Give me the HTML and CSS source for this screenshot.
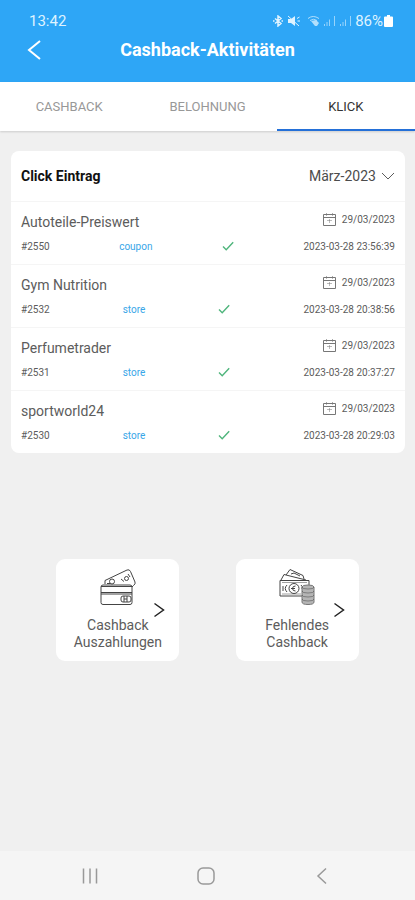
FILE: index.html
```html
<!DOCTYPE html>
<html lang="de">
<head>
<meta charset="utf-8">
<meta name="viewport" content="width=device-width, initial-scale=1">
<title>Cashback-Aktivitäten</title>
<link rel="stylesheet" href="styles.css">
</head>
<body>
<svg class="sprite" aria-hidden="true">
  <symbol id="check" viewBox="0 0 12 10"><path d="M1 5.5 4.2 8.7 11.2 1.2"/></symbol>
  <symbol id="calendar" viewBox="0 0 13 13"><path d="M.5 1.500h12v11H.5zM.5 4.500h12M3.500.4V2.500M9.500.4V2.500"/><path class="pale" d="M4 7.500h5M6.500 6v4"/></symbol>
  <symbol id="chevron" viewBox="0 0 12 16"><path d="M1.500 1.500 10.500 8 1.500 14.500"/></symbol>
</svg>
<header class="top">
  <div class="status">
    <span class="clock">13:42</span>
    <span class="indicators">
      <svg class="ind bold" width="12" height="12" viewBox="0 0 12 12"><path d="M3 3.500 9 8.500 6 11V1l3 2.500L3 8.500M1 6h1.500M9.500 6H11"/></svg>
      <svg class="ind mute" width="14" height="12" viewBox="0 0 14 12"><path class="solid" d="M1 4h3l4-3v10L4 8H1z"/><path d="M1 1l11 10M10 3.500 12.500 2M10.500 6H13"/></svg>
      <svg class="ind faint" width="13" height="12" viewBox="0 0 13 12"><path d="M1 3.500Q6-.5 12 3.500M3 5.500Q6.500 3 10 5.500"/><path class="solid" d="M4 6l5-1 3 3-2 3H8z"/></svg>
      <svg class="ind signal" width="13" height="12" viewBox="0 0 13 12"><path d="M1.500 11V9M4 11V7M6.500 11V4.500M11.500 11V1"/></svg>
      <svg class="ind signal" width="13" height="12" viewBox="0 0 13 12"><path d="M1.500 11V9M4 11V7M6.500 11V4.500M11.500 11V1"/></svg>
      <span class="percent">86%</span>
      <svg class="battery" width="9" height="12" viewBox="0 0 9 12"><path d="M3 0h3v1.500h2q1 0 1 1V11q0 1-1 1H1q-1 0-1-1V2.500q0-1 1-1h2z"/></svg>
    </span>
  </div>
  <div class="titlebar">
    <button class="back" aria-label="Zurück"><svg width="14" height="20" viewBox="0 0 14 20"><path d="M13 1 2 10l11 9"/></svg></button>
    <h1>Cashback-Aktivitäten</h1>
  </div>
</header>
<nav class="tabs">
  <a href="#cashback">CASHBACK</a>
  <a href="#belohnung">BELOHNUNG</a>
  <a href="#klick" class="active" aria-current="page">KLICK</a>
</nav>
<main>
  <section class="card">
    <div class="card-head">
      <h2>Click Eintrag</h2>
      <div class="month">
        <select aria-label="Monat"><option>März-2023</option></select>
        <svg width="14" height="8" viewBox="0 0 14 8"><path d="M1 1l6 6 6-6"/></svg>
      </div>
    </div>
    <ul class="entries">
      <li>
        <div class="line"><span class="name">Autoteile-Preiswert</span><span class="date"><svg><use href="#calendar"/></svg>29/03/2023</span></div>
        <div class="line meta"><span>#2550</span><span class="kind">coupon</span><svg class="check"><use href="#check"/></svg><time>2023-03-28 23:56:39</time></div>
      </li>
      <li>
        <div class="line"><span class="name">Gym Nutrition</span><span class="date"><svg><use href="#calendar"/></svg>29/03/2023</span></div>
        <div class="line meta"><span>#2532</span><span class="kind">store</span><svg class="check"><use href="#check"/></svg><time>2023-03-28 20:38:56</time></div>
      </li>
      <li>
        <div class="line"><span class="name">Perfumetrader</span><span class="date"><svg><use href="#calendar"/></svg>29/03/2023</span></div>
        <div class="line meta"><span>#2531</span><span class="kind">store</span><svg class="check"><use href="#check"/></svg><time>2023-03-28 20:37:27</time></div>
      </li>
      <li>
        <div class="line"><span class="name">sportworld24</span><span class="date"><svg><use href="#calendar"/></svg>29/03/2023</span></div>
        <div class="line meta"><span>#2530</span><span class="kind">store</span><svg class="check"><use href="#check"/></svg><time>2023-03-28 20:29:03</time></div>
      </li>
    </ul>
  </section>
  <div class="actions">
    <button class="action">
      <svg class="picture" width="38" height="38" viewBox="0 0 38 38">
        <path d="M6 16V12.500L28 2q2.500-1 3.500 1.500L36 14q.8 2-1.500 3.500L33 19"/>
        <circle cx="13" cy="13.500" r="2.500"/><path d="M8 15.500h3M22 11l3 2.500"/><circle cx="27.500" cy="10.500" r="2"/><path d="M29 6l2 3"/>
        <rect x="2" y="17" width="31" height="19.500" rx="2"/>
        <path d="M2 18.500h31M2 24.500h31M2 26h31"/>
        <rect x="22" y="28" width="10" height="6" rx="2"/><path d="M25 28v6M28 28v6M25 31h3"/>
      </svg>
      <span>Cashback<br>Auszahlungen</span>
      <svg class="arrow"><use href="#chevron"/></svg>
    </button>
    <button class="action">
      <svg class="picture" width="38" height="38" viewBox="0 0 38 38">
        <path d="M3 12 6 6.500 28 12M8 7l4-5.500 13 6 1 3.500M13 6l3-1 6 3"/>
        <path d="M24 28H2V12.500h29V17"/><path class="pale" d="M4 14.500h25M4 26h19"/>
        <circle cx="16" cy="20.500" r="5"/><path d="M17.500 18q-3 0-3 2.500t3 2.500M13 20.500h4M5 18v5M9 17q-3.500 3.500 0 7M23 17q2 1.500 1 4"/>
        <path class="coins" d="M24 19q0-2 6-2t6 2v15q0 2.500-6 2.500T24 34z"/>
        <path class="pale" d="M24 19q0 2 6 2t6-2M24 23q0 2 6 2t6-2M24 27q0 2 6 2t6-2M24 31q0 2 6 2t6-2"/>
      </svg>
      <span>Fehlendes<br>Cashback</span>
      <svg class="arrow"><use href="#chevron"/></svg>
    </button>
  </div>
</main>
<footer class="system">
  <button aria-label="Letzte Apps"><svg width="18" height="18" viewBox="0 0 18 18"><path d="M2.500 1.500v15M9 1.500v15M15.500 1.500v15"/></svg></button>
  <button aria-label="Startseite"><svg width="18" height="18" viewBox="0 0 18 18"><rect x="1" y="1" width="16" height="16" rx="5"/></svg></button>
  <button aria-label="Zurück"><svg width="18" height="18" viewBox="0 0 18 18"><path d="M13 1.500 5 9l8 7.500"/></svg></button>
</footer>
</body>
</html>
```
FILE: styles.css
```css
* { box-sizing: border-box; }
body {
  margin: 0;
  min-height: 100vh;
  display: flex;
  flex-direction: column;
  background: #f0f0f0;
  color: #5c5c5c;
  font-family: Roboto, "Liberation Sans", sans-serif;
}
h1, h2, ul { margin: 0; padding: 0; }
button {
  border: 0;
  padding: 0;
  background: none;
  color: inherit;
  font: inherit;
}
svg {
  flex: none;
  fill: none;
  stroke: currentColor;
}
.sprite { position: absolute; width: 0; height: 0; }
.pale { opacity: 0.5; }

.top {
  height: 82px;
  padding-top: 10px;
  background: #2ea6f6;
  color: #fff;
}
.status {
  display: flex;
  justify-content: space-between;
  align-items: center;
  height: 22px;
  padding: 0 22px 0 29px;
  font-size: 15px;
  color: #dff3ff;
}
.indicators { display: flex; align-items: center; gap: 3px; }
.percent { font-size: 15px; }
.ind .solid, .battery { fill: currentColor; stroke: none; }
.bold { stroke-width: 1.500; }
.battery { color: #fff; margin-left: -2px; }
.mute { margin-right: 3px; }
.faint { opacity: 0.75; }
.signal { opacity: 0.6; }
.titlebar {
  display: grid;
  grid-template-columns: 1fr auto 1fr;
  align-items: center;
  height: 36px;
}
.back { justify-self: start; margin-left: 27px; height: 20px; }
.back svg { display: block; stroke-width: 2; }
h1 { font-size: 18px; line-height: 24px; font-weight: 700; }

.tabs {
  display: grid;
  grid-template-columns: repeat(3, 1fr);
  height: 49px;
  background: #fff;
  box-shadow: 0 1px 2px rgba(0, 0, 0, 0.15);
}
.tabs a {
  display: flex;
  align-items: center;
  justify-content: center;
  padding-top: 2px;
  border-bottom: 2px solid transparent;
  color: #989898;
  font-size: 13px;
  text-decoration: none;
}
.tabs .active { color: #333; border-color: #2470d8; }

main { flex: 1; }
.card {
  margin: 20px 10px 0 11px;
  border-radius: 8px;
  background: #fff;
}
.card-head {
  display: flex;
  justify-content: space-between;
  align-items: center;
  height: 50px;
  padding: 0 10px;
}
h2 { color: #111; font-size: 14px; font-weight: 700; }
.month { display: flex; align-items: center; gap: 5px; }
.month select {
  appearance: none;
  border: 0;
  padding: 0;
  background: none;
  color: #4c4c4c;
  font: inherit;
  font-size: 14px;
}
.entries { list-style: none; }
.entries li {
  height: 63px;
  padding: 8px 10px 0;
  border-top: 1px solid #f5f5f5;
}
.line {
  display: flex;
  justify-content: space-between;
  height: 27px;
}
.name { padding-top: 2px; font-size: 14px; line-height: 20px; }
.date {
  display: flex;
  align-items: center;
  gap: 6px;
  height: 18px;
  font-size: 10px;
}
.date svg { width: 13px; height: 13px; color: #777; }
.meta {
  align-items: center;
  height: 18px;
  font-size: 10px;
}
.kind { color: #38a6e8; }
.check { width: 12px; height: 10px; color: #4fb57c; stroke-width: 1.4; }

.actions {
  display: flex;
  justify-content: space-evenly;
  margin-top: 106px;
}
.action {
  position: relative;
  display: flex;
  flex-direction: column;
  align-items: center;
  width: 123px;
  height: 102px;
  padding-top: 9px;
  border-radius: 9px;
  background: #fff;
  font-size: 14px;
  line-height: 17px;
}
.picture { margin-bottom: 11px; color: #444; }
.coins { fill: #b5b5b5; stroke: #777; }
.arrow {
  position: absolute;
  right: 14px;
  top: 43px;
  width: 12px;
  height: 16px;
  color: #222;
  stroke-width: 1.500;
}

.system {
  display: grid;
  grid-template-columns: repeat(3, 116px);
  justify-content: center;
  align-items: center;
  height: 49px;
  padding-right: 4px;
  background: #f5f5f5;
  color: #999;
}
.system svg { display: block; margin: 0 auto; stroke-width: 1.500; }
```
